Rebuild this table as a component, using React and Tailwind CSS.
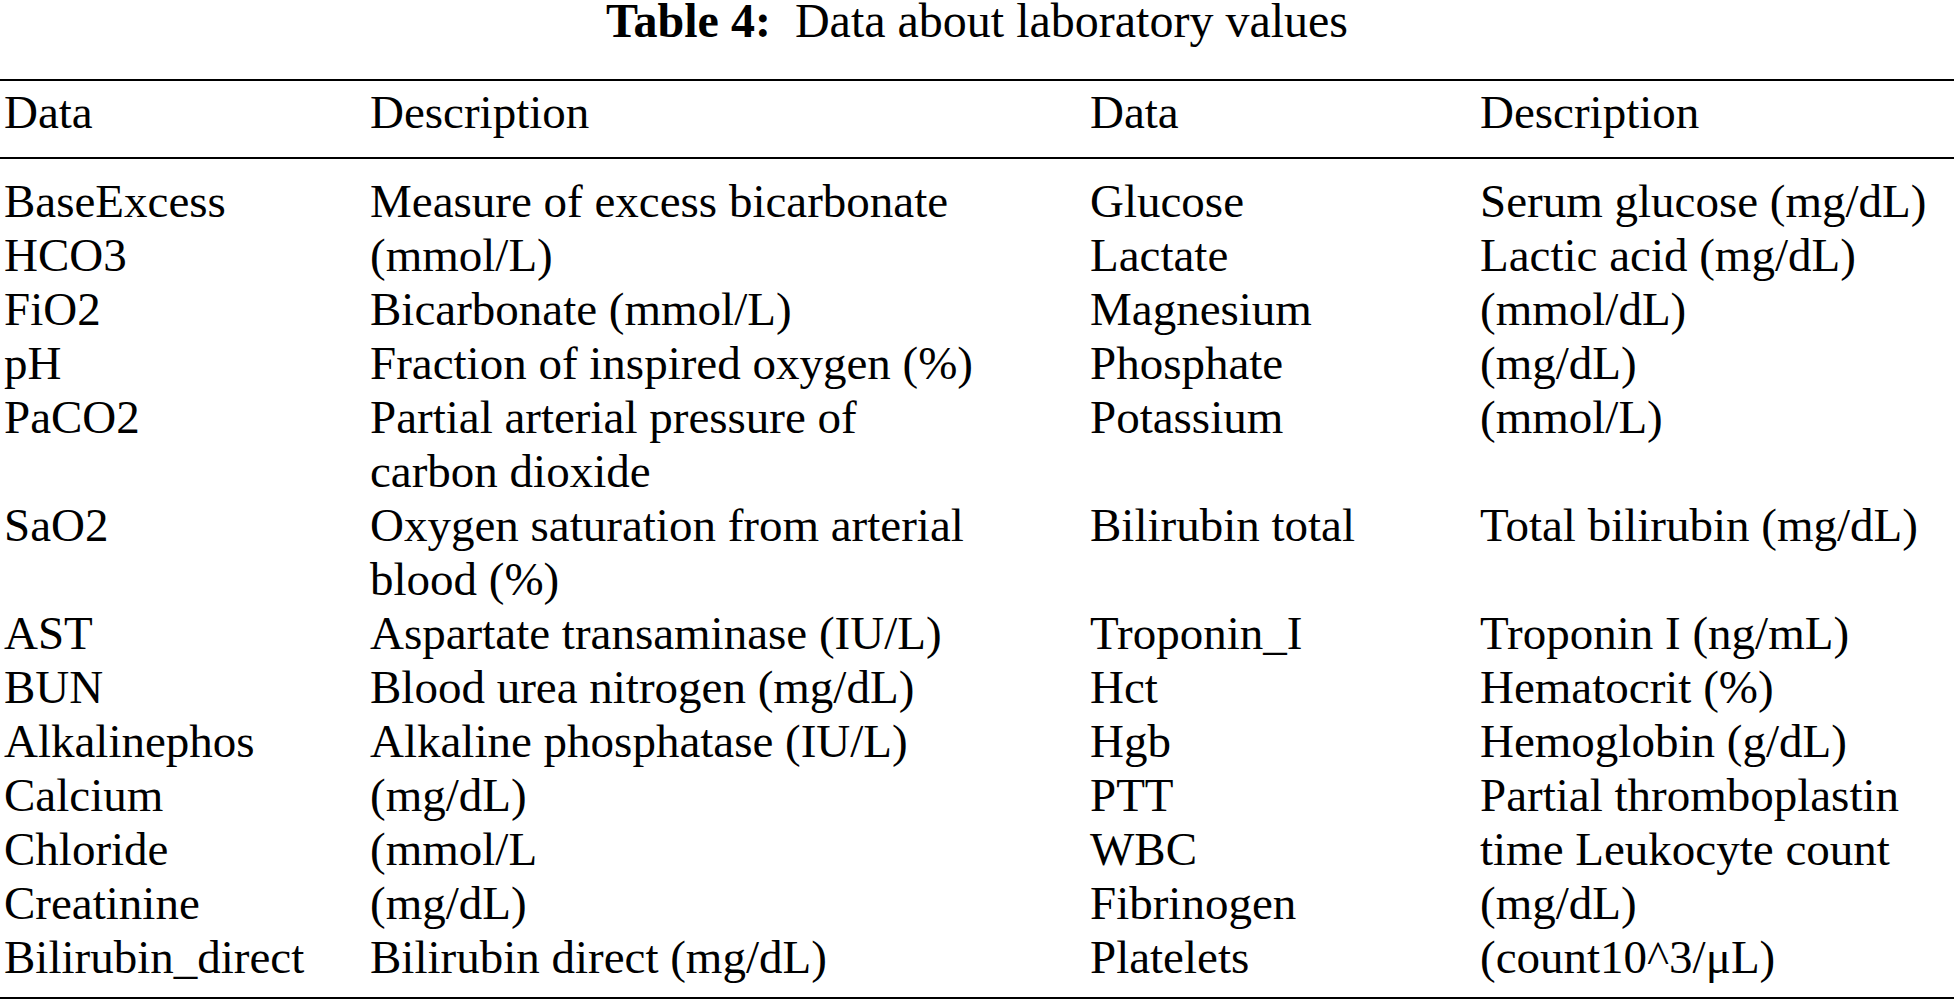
const rows = [
  ["BaseExcess", ["Measure of excess bicarbonate"], "Glucose", "Serum glucose (mg/dL)"],
  ["HCO3", ["(mmol/L)"], "Lactate", "Lactic acid (mg/dL)"],
  ["FiO2", ["Bicarbonate (mmol/L)"], "Magnesium", "(mmol/dL)"],
  ["pH", ["Fraction of inspired oxygen (%)"], "Phosphate", "(mg/dL)"],
  ["PaCO2", ["Partial arterial pressure of", "carbon dioxide"], "Potassium", "(mmol/L)"],
  ["SaO2", ["Oxygen saturation from arterial", "blood (%)"], "Bilirubin total", "Total bilirubin (mg/dL)"],
  ["AST", ["Aspartate transaminase (IU/L)"], "Troponin_I", "Troponin I (ng/mL)"],
  ["BUN", ["Blood urea nitrogen (mg/dL)"], "Hct", "Hematocrit (%)"],
  ["Alkalinephos", ["Alkaline phosphatase (IU/L)"], "Hgb", "Hemoglobin (g/dL)"],
  ["Calcium", ["(mg/dL)"], "PTT", "Partial thromboplastin"],
  ["Chloride", ["(mmol/L"], "WBC", "time Leukocyte count"],
  ["Creatinine", ["(mg/dL)"], "Fibrinogen", "(mg/dL)"],
  ["Bilirubin_direct", ["Bilirubin direct (mg/dL)"], "Platelets", "(count10^3/\u03bcL)"],
];

const cols = "grid grid-cols-[366px_720px_390px_1fr] pl-[4px]";

export default function App() {
  return (
    <div className="min-h-screen bg-white text-black font-['Liberation_Serif','Times_New_Roman',serif] text-[47px] leading-[54px]">
      <div className="text-center text-[48px] leading-[42px]">
        <span className="font-bold">Table 4:</span>
        {"\u00a0 "}Data about laboratory values
      </div>

      <div className="mt-[37px] border-t-2 border-black">
        <div className={`${cols} pt-[4px] pb-[18px]`}>
          <div>Data</div>
          <div>Description</div>
          <div>Data</div>
          <div>Description</div>
        </div>
      </div>

      <div className="border-y-2 border-black pt-[15px] pb-[13px]">
        {rows.map(([name, desc, name2, desc2]) => (
          <div key={name} className={`${cols} whitespace-nowrap`}>
            <div>{name}</div>
            <div>
              {desc.map((line) => (
                <div key={line}>{line}</div>
              ))}
            </div>
            <div>{name2}</div>
            <div>{desc2}</div>
          </div>
        ))}
      </div>
    </div>
  );
}
